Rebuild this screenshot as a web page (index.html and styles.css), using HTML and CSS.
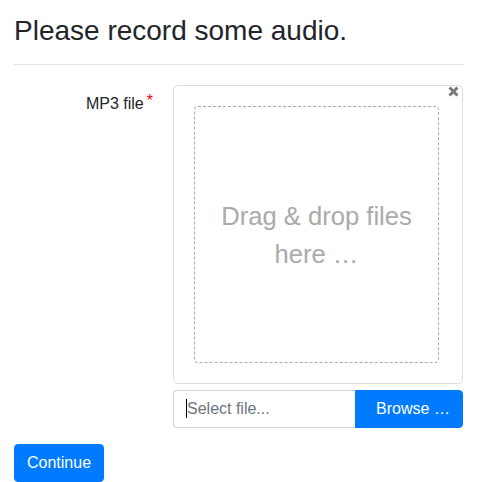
FILE: index.html
```html
<!DOCTYPE html>
<html>
<head>
<meta charset="utf-8">
<link rel="stylesheet" href="styles.css">
</head>
<body>
<div class="page">
  <h3 class="title">Please record some audio.</h3>
  <hr class="divider">
  <div class="form-row">
    <label class="form-label">MP3 file<span class="req">*</span></label>
    <div class="field">
      <div class="file-preview">
        <span class="remove" aria-label="Remove">
          <svg width="11" height="11" viewBox="0 0 11 11"><path d="M1.5 1.5 L9.5 9.5 M9.5 1.5 L1.5 9.5" stroke="#7a7a7a" stroke-width="3" stroke-linecap="butt"/></svg>
        </span>
        <div class="drop-zone">
          <div class="drop-title">Drag &amp; drop files here …</div>
        </div>
      </div>
      <div class="input-group">
        <div class="caption"><span class="caret"></span>Select file...</div>
        <button class="browse" type="button">Browse …</button>
      </div>
    </div>
  </div>
  <button class="btn-continue" type="button">Continue</button>
</div>
</body>
</html>
```
FILE: styles.css
```css
* { box-sizing: border-box; }
html, body { margin: 0; padding: 0; background: #fff; }
body {
  font-family: "Liberation Sans", Arial, sans-serif;
  font-size: 16px;
  line-height: 1.5;
  color: #212529;
}
.page {
  padding: 14px 14px 0 14px;
}
.title {
  margin: 0;
  font-size: 28px;
  font-weight: 500;
  line-height: 1.2;
}
.divider {
  margin: 16px 0 20px 0;
  border: 0;
  border-top: 1px solid rgba(0,0,0,.1);
  height: 0;
}
.form-row {
  display: flex;
  gap: 15px;
  margin-right: 1px;
}
.form-label {
  width: 144px;
  flex: none;
  text-align: right;
  padding-top: 7px;
  padding-right: 5px;
}
.req {
  color: #ff0000;
  font-size: 16px;
  vertical-align: 3px;
  margin-left: 3px;
  line-height: 1;
}
.field {
  flex: 1;
  min-width: 0;
}
.file-preview {
  position: relative;
  border: 1px solid #ddd;
  border-radius: 5px;
  padding: 8px;
}
.remove {
  position: absolute;
  top: 0;
  right: 3px;
  width: 11px;
  height: 11px;
  display: block;
  line-height: 0;
}
.drop-zone {
  border: 1px dashed #aaa;
  border-radius: 4px;
  margin: 12px 15px 12px 12px;
  height: 257px;
  display: flex;
  align-items: center;
  justify-content: center;
  padding: 7px 10px 5px 10px;
}
.drop-title {
  color: #aaa;
  font-size: 25.6px;
  line-height: 38.4px;
  text-align: center;
}
.input-group {
  display: flex;
  margin-top: 6px;
  height: 38px;
}
.caption {
  flex: 1;
  border: 1px solid #ced4da;
  border-right: 0;
  border-radius: 4px 0 0 4px;
  padding: 6px 12px;
  color: #6c757d;
  line-height: 24px;
  white-space: nowrap;
  display: flex;
  align-items: center;
}
.caret {
  display: inline-block;
  width: 1px;
  height: 19px;
  background: #000;
}
.browse {
  width: 108px;
  flex: none;
  background: #007bff;
  color: #fff;
  border: 1px solid #007bff;
  border-radius: 0 4px 4px 0;
  font-family: inherit;
  font-size: 16px;
  line-height: 24px;
  padding: 6px 0 6px 8px;
  text-align: center;
}
.btn-continue {
  margin-top: 16px;
  width: 90px;
  height: 38px;
  background: #007bff;
  color: #fff;
  border: 1px solid #007bff;
  border-radius: 4px;
  font-family: inherit;
  font-size: 16px;
  line-height: 24px;
  padding: 6px 12px;
  display: block;
}
```
